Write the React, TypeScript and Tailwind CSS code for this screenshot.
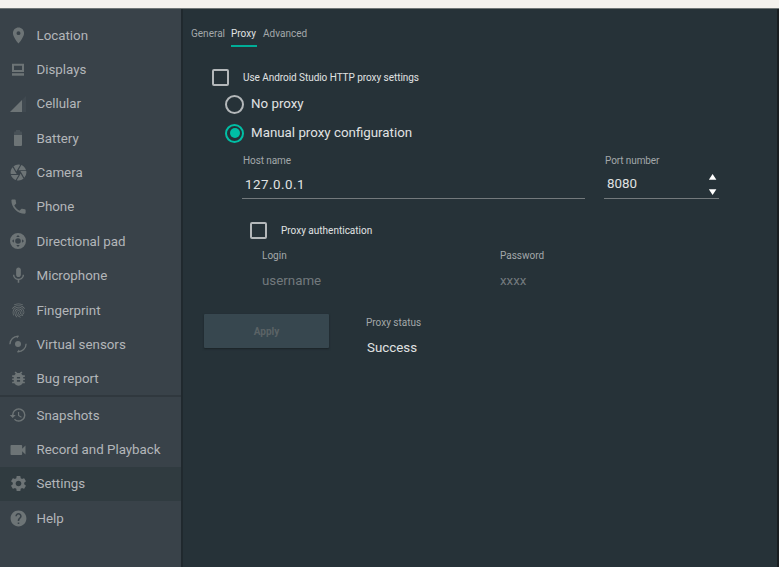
import type { ReactNode } from "react";
import {
  MdBugReport,
  MdCamera,
  MdFingerprint,
  MdHelp,
  MdHistory,
  MdMic,
  MdPhone,
  MdPlace,
  MdSettings,
  MdVideocam,
} from "react-icons/md";

function DisplaysIcon() {
  return (
    <svg viewBox="0 0 16 16" width="16" height="16" fill="currentColor">
      <path fillRule="evenodd" d="M2 1.700h12v8.300H2zM4 3.700v4.300h8V3.700z" />
      <path d="M2 11.200h12v2.500H2z" />
    </svg>
  );
}

function CellularIcon() {
  return (
    <svg viewBox="0 0 16 16" width="16" height="16" fill="currentColor">
      <path fillOpacity=".15" d="M0 16 16 0v16z" />
      <path d="M0 16 12 4v12z" />
    </svg>
  );
}

function BatteryIcon() {
  return (
    <svg viewBox="0 0 16 16" width="16" height="16" fill="currentColor">
      <path fillOpacity=".3" d="M10 1.5V0H6v1.5H4.9a.9.9 0 0 0-.9.9V5h8V2.400a.9.9 0 0 0-.9-.9z" />
      <path d="M4 5v10.100c0 .5.4.9.9.9h6.200c.5 0 .9-.4.900-.9V5z" />
    </svg>
  );
}

function DirectionalPadIcon() {
  return (
    <svg viewBox="0 0 16 16" width="16" height="16" fill="currentColor">
      <path
        fillRule="evenodd"
        d="M8 0a8 8 0 1 1 0 16A8 8 0 0 1 8 0zM8 5.200a2.800 2.800 0 1 0 0 5.600 2.800 2.800 0 0 0 0-5.600zM8 2 6.200 3.900h3.600zM8 14l1.800-1.900H6.200zM2 8l1.900 1.800V6.200zM14 8l-1.900-1.800v3.600z"
      />
    </svg>
  );
}

function SensorsIcon() {
  return (
    <svg viewBox="0 0 18 18" width="18" height="18" fill="none" stroke="currentColor" strokeWidth="1.300">
      <circle cx="9" cy="9" r="3" fill="currentColor" stroke="none" />
      <path d="M.9 9.300A8 8 0 0 1 9.300 1.300" />
      <path d="M17.100 8.700A8 8 0 0 1 8.700 16.700" />
      <path d="M7.500 .7h2.600L8 3.400zM10.500 17.300H7.900L10 14.600z" fill="currentColor" stroke="none" />
    </svg>
  );
}

type Item = { label: string; icon: ReactNode; active?: boolean };

const primary: Item[] = [
  { label: "Location", icon: <MdPlace size={19} /> },
  { label: "Displays", icon: <DisplaysIcon /> },
  { label: "Cellular", icon: <CellularIcon /> },
  { label: "Battery", icon: <BatteryIcon /> },
  { label: "Camera", icon: <MdCamera size={19} /> },
  { label: "Phone", icon: <MdPhone size={19} /> },
  { label: "Directional pad", icon: <DirectionalPadIcon /> },
  { label: "Microphone", icon: <MdMic size={19} /> },
  { label: "Fingerprint", icon: <MdFingerprint size={17} /> },
  { label: "Virtual sensors", icon: <SensorsIcon /> },
  { label: "Bug report", icon: <MdBugReport size={19} /> },
];

const secondary: Item[] = [
  { label: "Snapshots", icon: <MdHistory size={18} /> },
  { label: "Record and Playback", icon: <MdVideocam size={20} /> },
  { label: "Settings", icon: <MdSettings size={19} />, active: true },
  { label: "Help", icon: <MdHelp size={19} /> },
];

function NavItem({ label, icon, active }: Item) {
  return (
    <li className={`flex h-[34.36px] items-center ${active ? "bg-[#303b40]" : ""}`}>
      <span className="flex w-9 shrink-0 items-center justify-center text-[#6d7476]">{icon}</span>
      <span className="whitespace-nowrap pt-px pl-[0.500px] text-[13.33px] leading-4 text-[#b3b6b9]">{label}</span>
    </li>
  );
}

function Checkbox() {
  return <span className="block size-[17px] shrink-0 rounded-[2px] border-2 border-[#b4b8ba]" />;
}

function Radio({ checked }: { checked?: boolean }) {
  return (
    <span
      className={`flex size-[19px] shrink-0 items-center justify-center rounded-full border-2 ${
        checked ? "border-[#00bfa5]" : "border-[#b4b8ba]"
      }`}
    >
      {checked && <span className="size-[10px] rounded-full bg-[#00bfa5]" />}
    </span>
  );
}

const small = "whitespace-nowrap text-[10px] leading-4 pt-px";
const body = "whitespace-nowrap text-[13.33px] leading-4";

export default function App() {
  return (
    <div className="flex h-[567px] w-[779px] flex-col overflow-hidden bg-[#263238] font-[Roboto,sans-serif]">
      <div className="h-[9px] shrink-0 border-b border-[#6f7576] bg-[#f4f2ee]" />
      <div className="flex min-h-0 flex-1">
        <nav className="w-[181px] shrink-0 bg-[#394249] pt-[9px]">
          <ul>
            {primary.map((item) => (
              <NavItem key={item.label} {...item} />
            ))}
          </ul>
          <div className="-mt-px mb-[0.600px] h-[2.500px] bg-[#30383e]" />
          <ul>
            {secondary.map((item) => (
              <NavItem key={item.label} {...item} />
            ))}
          </ul>
        </nav>

        <main className="flex min-w-0 flex-1 flex-col border-r-2 border-l-2 border-r-[#191e21] border-l-[#20292e] bg-[#263238] text-[#e0e2e3]">
          <div className="flex gap-[6px] pt-4 pl-2">
            <span className={`${small} h-[22px] text-[#a3a8aa]`}>General</span>
            <span className={`${small} h-[22px] w-[26px] border-b-2 border-[#00ad97] text-[#e0e2e3]`}>Proxy</span>
            <span className={`${small} h-[22px] text-[#a3a8aa]`}>Advanced</span>
          </div>

          <div className="mt-[22px] flex h-4 items-center gap-[14px] pl-[29px]">
            <Checkbox />
            <span className={`${small} tracking-[-0.050px]`}>Use Android Studio HTTP proxy settings</span>
          </div>
          <div className="mt-[9px] flex h-5 items-center gap-[7px] pl-[42px]">
            <Radio />
            <span className={body}>No proxy</span>
          </div>
          <div className="mt-[9px] flex h-5 items-center gap-[7px] pl-[42px]">
            <Radio checked />
            <span className={body}>Manual proxy configuration</span>
          </div>

          <div className="mt-[9px] flex gap-[19px] pl-[59px]">
            <div className="h-[47px] w-[343px] border-b border-[#73797c]">
              <div className={`${small} pl-px tracking-[-0.100px] text-[#a3a8aa]`}>Host name</div>
              <div className={`${body} pt-2 pl-[3px] tracking-[0.500px]`}>127.0.0.1</div>
            </div>
            <div className="h-[47px] w-[115px] border-b border-[#73797c]">
              <div className={`${small} pl-px tracking-[-0.100px] text-[#a3a8aa]`}>Port number</div>
              <div className="flex items-start justify-between pt-[7px] pr-[2px] pl-[3px]">
                <span className={body}>8080</span>
                <svg className="-mt-[2px]" width="8" height="22" viewBox="0 0 8 22" fill="#fff">
                  <path d="M3.600 0 7.400 5.700H-.2zM3.600 21 -.2 15.200h7.600z" />
                </svg>
              </div>
            </div>
          </div>

          <div className="mt-[23px] flex h-4 items-center gap-[14px] pl-[67px]">
            <Checkbox />
            <span className={small}>Proxy authentication</span>
          </div>
          <div className="mt-[9px] flex pl-[79px]">
            <div className="w-[238px]">
              <div className={`${small} text-[#a3a8aa]`}>Login</div>
              <div className={`${body} pt-[9px] text-[#72797d]`}>username</div>
            </div>
            <div>
              <div className={`${small} text-[#a3a8aa]`}>Password</div>
              <div className={`${body} pt-[9px] text-[#72797d]`}>xxxx</div>
            </div>
          </div>

          <div className="mt-[25px] flex pl-[21px]">
            <button
              type="button"
              className="h-[34px] w-[125px] rounded-[1px] bg-[#37474f] text-[10px] font-bold text-[#5b6366] shadow-[0_1px_2px_#1a2226]"
            >
              Apply
            </button>
            <div className="pl-[37px]">
              <div className={`${small} text-[#a3a8aa]`}>Proxy status</div>
              <div className={`${body} pt-[9px] pl-px`}>Success</div>
            </div>
          </div>
        </main>
      </div>
    </div>
  );
}
